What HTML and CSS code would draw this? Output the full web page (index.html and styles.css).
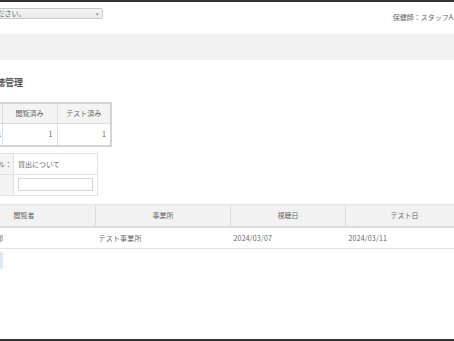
FILE: index.html
```html
<!DOCTYPE html>
<html lang="ja">
<head>
<meta charset="utf-8">
<title>視聴管理</title>
<link rel="stylesheet" href="styles.css">
</head>
<body>
<div class="topbar"></div>
<header class="header">
  <div class="select"><span class="select-text">選択してください。</span><span class="caret">▾</span></div>
  <div class="user">保健師：スタッフA</div>
</header>
<div class="band"></div>
<main class="main">
  <h1 class="title">視聴管理</h1>
  <table class="summary">
    <thead>
      <tr><th class="c1">対象者数</th><th class="c2">閲覧済み</th><th class="c3">テスト済み</th></tr>
    </thead>
    <tbody>
      <tr><td class="first">1</td><td>1</td><td>1</td></tr>
    </tbody>
  </table>
  <table class="form">
    <tr><th>タイトル：</th><td>貸出について</td></tr>
    <tr><th></th><td><div class="input"></div></td></tr>
  </table>
  <table class="list">
    <thead>
      <tr><th class="l1">閲覧者</th><th class="l2">事業所</th><th class="l3">視聴日</th><th class="l4">テスト日</th></tr>
    </thead>
    <tbody>
      <tr><td class="right">テスト太郎</td><td>テスト事業所</td><td>2024/03/07</td><td>2024/03/11</td></tr>
    </tbody>
  </table>
  <div class="btn">戻る</div>
</main>
<div class="footer"></div>
</body>
</html>
```
FILE: styles.css
```css
html, body {
  margin: 0;
  padding: 0;
}
body {
  width: 454px;
  height: 341px;
  overflow: hidden;
  display: flex;
  flex-direction: column;
  background: #fff;
  font-family: "Noto Sans CJK JP", "Noto Sans", sans-serif;
  font-size: 7px;
  color: #666;
}
.topbar {
  height: 2px;
  background: #333;
  flex: none;
}
.header {
  height: 32px;
  flex: none;
  display: flex;
  justify-content: space-between;
  align-items: flex-start;
  padding-top: 6px;
  box-sizing: border-box;
}
.select {
  margin-left: -42px;
  width: 145px;
  height: 11px;
  box-sizing: border-box;
  border: 1px solid #c8c8c8;
  border-radius: 2px;
  background: linear-gradient(#f6f6f6, #e9e9e9);
  display: flex;
  align-items: center;
  justify-content: space-between;
  padding: 0 3px 0 4px;
  color: #666;
  line-height: 1;
}
.caret {
  font-size: 5px;
  color: #888;
}
.user {
  margin-top: 4px;
  margin-right: 1px;
  line-height: 10px;
  color: #666;
}
.band {
  height: 26px;
  flex: none;
  background: #f1f1f1;
}
.main {
  margin-left: -47px;
  width: 507px;
  flex: none;
}
.title {
  margin: 16px 0 12px 0;
  padding-left: 34px;
  font-size: 9px;
  line-height: 14px;
  font-weight: 700;
  color: #555;
}
table {
  border-collapse: collapse;
}
.summary {
  border: 2px solid #d4d4d4;
}
.summary th, .summary td {
  border: 1px solid #dcdcdc;
  font-weight: 400;
  padding: 0 4px;
}
.summary th {
  background: #f4f4f4;
  height: 20px;
  text-align: center;
}
.summary td {
  height: 21px;
  text-align: right;
  background: #fff;
}
.summary td.first {
  padding-right: 0;
}
.summary .c1 { width: 48px; box-sizing: border-box; }
.summary .c2 { width: 55px; box-sizing: border-box; }
.summary .c3 { width: 54px; box-sizing: border-box; }
.form {
  margin-top: 6px;
  border: 1px solid #e2e2e2;
}
.form th, .form td {
  border: 1px solid #e2e2e2;
  font-weight: 400;
  height: 21px;
  padding: 0;
  box-sizing: border-box;
}
.form th {
  width: 60px;
  background: #f4f4f4;
  text-align: right;
  padding-right: 1px;
}
.form td {
  width: 84px;
  text-align: left;
  padding-left: 4px;
}
.input {
  width: 75px;
  height: 13px;
  box-sizing: border-box;
  border: 1px solid #d6d6d6;
  background: #fff;
}
.list {
  margin-top: 8px;
  width: 507px;
  table-layout: fixed;
}
.list th {
  height: 21px;
  background: #f2f2f2;
  border-top: 1px solid #e6e6e6;
  border-bottom: 2px solid #dcdcdc;
  border-left: 1px solid #dcdcdc;
  font-weight: 400;
  text-align: center;
  padding: 0;
}
.list th:first-child { border-left: none; }
.list .l1 { width: 142px; }
.list .l2 { width: 134px; }
.list .l3 { width: 114px; }
.list .l4 { width: 117px; }
.list td {
  height: 20px;
  border-bottom: 1px solid #e3e3e3;
  padding: 0 0 0 3px;
  text-align: left;
  letter-spacing: 0.2px;
}
.list td.right {
  text-align: right;
  padding-right: 92px;
}
.btn {
  margin-top: 3px;
  width: 50px;
  height: 17px;
  background: #d9e8f8;
  border-radius: 2px;
  color: #4a6a90;
  display: flex;
  align-items: center;
  justify-content: center;
}
.footer {
  margin-top: auto;
  height: 2px;
  background: #333;
  flex: none;
}
```
